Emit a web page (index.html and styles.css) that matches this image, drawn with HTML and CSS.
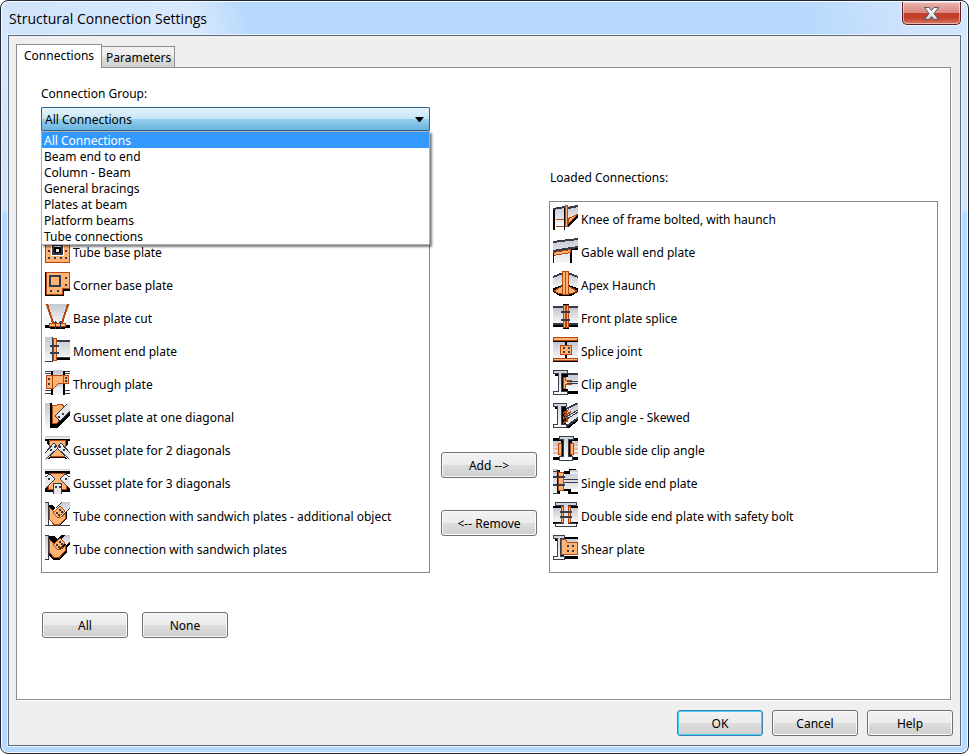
FILE: index.html
```
<!DOCTYPE html>
<html lang="en">
<head>
    <meta charset="UTF-8">
    <meta name="viewport" content="width=device-width, initial-scale=1.0">
    <title>Structural Connection Settings</title>
    <link rel="stylesheet" href="styles.css">
</head>
<body>

    <!-- Shared gradients for the steel parts -->
    <svg class="defs" width="0" height="0" aria-hidden="true">
        <linearGradient id="steel" x1="0" y1="0" x2="0" y2="1">
            <stop offset="0" stop-color="#c3c7cf"/>
            <stop offset="1" stop-color="#f6f7f9"/>
        </linearGradient>
        <linearGradient id="beam" x1="0" y1="0" x2="0" y2="1">
            <stop offset="0" stop-color="#cdd1d9"/>
            <stop offset="1" stop-color="#fbfcfd"/>
        </linearGradient>
        <linearGradient id="cross" x1="0" y1="0" x2="0" y2="1">
            <stop offset="0" stop-color="#ffffff"/>
            <stop offset="1" stop-color="#d4d4d8"/>
        </linearGradient>
    </svg>

    <div class="window">
        <header class="titlebar">
            <h1 class="title">Structural Connection Settings</h1>
            <button class="close" type="button" aria-label="Close">
                <svg width="17" height="15" viewBox="0 0 17 15"><path d="M1.500 1.500H6L8.500 4.500L11 1.500H15.500L11 7.500L15.500 13.500H11L8.500 10.500L6 13.500H1.500L6 7.500Z" fill="url(#cross)" stroke="#535666"/></svg>
            </button>
        </header>

        <main class="client">
            <div class="tabs" role="tablist">
                <button class="tab active" type="button" role="tab" aria-selected="true">Connections</button>
                <button class="tab" type="button" role="tab" aria-selected="false">Parameters</button>
            </div>

            <section class="panel" role="tabpanel">
                <div class="group">
                    <label for="group">Connection Group:</label>
                    <div class="combo">
                        <select id="group">
                            <option>All Connections</option>
                            <option>Beam end to end</option>
                            <option>Column - Beam</option>
                            <option>General bracings</option>
                            <option>Plates at beam</option>
                            <option>Platform beams</option>
                            <option>Tube connections</option>
                        </select>
                        <svg class="arrow" width="9" height="5" viewBox="0 0 9 5"><path d="M0 0H9L5 5H4Z"/></svg>
                        <ul class="dropdown" role="listbox">
                            <li class="selected" role="option" aria-selected="true">All Connections</li>
                            <li role="option">Beam end to end</li>
                            <li role="option">Column - Beam</li>
                            <li role="option">General bracings</li>
                            <li role="option">Plates at beam</li>
                            <li role="option">Platform beams</li>
                            <li role="option">Tube connections</li>
                        </ul>
                    </div>
                </div>

                <div class="columns">
                    <ul class="list available">
                        <li>
                            <svg class="icon" viewBox="0 0 25 25"><path class="o" d="M.5.5H24.500V24.500H.5Z"/><path fill="#fff" d="M6 5H19V18H6Z"/><path class="d" d="M7 6H18V17H7Z"/><path fill="#fff" d="M9 8H16V15H9Z"/><path class="k" d="M9 9H16V15H9Z"/><path fill="#e4e7ec" d="M11 11H14V14H11Z"/><path class="d" d="M3 5h2v2h-2zM20 5h2v2h-2zM3 12h2v2h-2zM20 12h2v2h-2zM3 19h2v2h-2zM9 19h2v2h-2zM15 19h2v2h-2zM20 19h2v2h-2z"/></svg>
                            Tube base plate
                        </li>
                        <li>
                            <svg class="icon" viewBox="0 0 25 25"><path class="k" d="M0 1H25V20H19V25H0Z"/><path class="o" d="M1.500 1.500H24.500V17.500H17.500V23.500H1.500Z"/><path class="dl w2" d="M5 5H15V15H5Z"/><path class="d" d="M20 6h2v2h-2zM20 13h2v2h-2zM5 19h2v2h-2zM12 19h2v2h-2z"/></svg>
                            Corner base plate
                        </li>
                        <li>
                            <svg class="icon" viewBox="0 0 25 25"><path class="s" d="M0 0H25L18 19H7Z"/><path class="k" d="M0 21H25V24H20V25H5V24H0Z"/><path fill="#f1f2f4" d="M0 8L5 19V21H0ZM25 8L20 19V21H25Z"/><path class="ol w2" d="M2 0L8 19M23 0L17 19"/><path class="o" d="M4.500 19.500H20.500V22.500H4.500Z"/><path class="dl" d="M10.500 17V25M15.500 17V25M9 18.500H12M14 18.500H17"/></svg>
                            Base plate cut
                        </li>
                        <li>
                            <svg class="icon" viewBox="0 0 25 25"><path class="s" d="M0 0H7V24H0ZM13 4H25V19H13Z"/><path class="d" d="M7 0H8V24H7ZM12 3H25V5H12ZM0 24H8V25H0Z"/><path class="k" d="M12 20H25V23H12Z"/><path class="o" d="M8.500 1.500H11.500V23.500H8.500Z"/><path class="d" d="M5 8H14V10H5ZM5 15H14V17H5ZM12 20H25V21H12Z"/></svg>
                            Moment end plate
                        </li>
                        <li>
                            <svg class="icon" viewBox="0 0 25 25"><path class="s" d="M8 0H18V25H8Z"/><path class="k" d="M6 1H8V25H6ZM18 1H20V25H18Z"/><path class="dl" d="M0 1.500H6M0 3.500H6M20 1.500H25M20 3.500H25M0 20.500H6M0 23.500H6M20 20.500H25M20 23.500H25"/><path class="o" d="M1.500 5.500H23.500V13.500H13.500L8.500 18.500H1.500Z"/><path class="ol" d="M7.500 6V18M18.500 6V13"/><path class="s" d="M9 18L14 14H18V19H9Z"/><path class="d" d="M3 8h2v2h-2zM3 13h2v2h-2zM20 7h2v2h-2zM20 10h2v2h-2z"/></svg>
                            Through plate
                        </li>
                        <li>
                            <svg class="icon" viewBox="0 0 25 25"><path class="s" d="M0 0H5V25H0Z"/><path class="k" d="M5 0H7V25H5ZM7 21H11L25 8V12L12 25H5Z"/><path class="o" d="M7.500 2.500L17 1.500L23 7L11.500 20.500H7.500Z"/><path fill="#e5e7ea" d="M11 12L22 0H25V8L15 18Z"/><path class="dl" d="M10 13L22 1M15 18L25 8M10 13L15 18"/><path class="d" d="M13 13h2v2h-2zM17 10h2v2h-2z"/></svg>
                            Gusset plate at one diagonal
                        </li>
                        <li>
                            <svg class="icon" viewBox="0 0 25 25"><path class="s" d="M0 0H25V3H0Z"/><path class="k" d="M0 3H25V5H0ZM2 5H23V8L20 11L25 20V24L18 22H7L0 24V19L5 11L2 8Z"/><path class="o" d="M4.500 4.500H20.500V20.500H4.500Z"/><path fill="#e8eaed" d="M0 17L9 7L14 12L1 24H0ZM25 17L16 7L11 12L24 24H25Z"/><path class="dl" d="M0 17L9 7L13 12L1 23M25 17L16 7L12 12L24 23"/><path class="d" d="M5 13h2v2h-2zM9 10h2v2h-2zM14 10h2v2h-2zM18 13h2v2h-2z"/></svg>
                            Gusset plate for 2 diagonals
                        </li>
                        <li>
                            <svg class="icon" viewBox="0 0 25 25"><path class="s" d="M0 0H25V2H0Z"/><path class="k" d="M0 2H25V5H0ZM4 15H21L25 20V23H0V20Z"/><path class="o" d="M4.500 4.500H20.500V13L22 20.500H3L4.500 13Z"/><path fill="#e8eaed" d="M0 8L5 5L10 10L0 20ZM25 8L20 5L15 10L25 20Z"/><path class="dl" d="M0 8L5 5L10 10L0 20M25 8L20 5L15 10L25 20"/><path fill="#e4e6ea" d="M8 15H17V25H8Z"/><path class="dl" d="M8.500 25V14.500H16.500V25"/><path class="d" d="M3 9h2v2h-2zM20 9h2v2h-2zM10 17h2v2h-2zM14 17h2v2h-2z"/></svg>
                            Gusset plate for 3 diagonals
                        </li>
                        <li>
                            <svg class="icon" viewBox="0 0 25 25"><path class="s" d="M0 0H3V24H0Z"/><path class="dl" d="M0 .5H3.500V24M0 23.500H25"/><path class="k" d="M4 3H7L10 6L8 9L4 7ZM15 23L22 17V10L18 12L15 16Z"/><path class="s" d="M11 6L17 0H25V6L18 13Z"/><path class="dl" d="M11 6L17 0M18 13L25 6"/><path class="o" d="M4.500 5.500L8 9L15 16L20 12V17L14.500 22.500H9L4.500 17.500Z"/><path class="of" d="M7 10L14 16L12 19L6 14Z"/><path class="o" d="M8 11L15 4L20 9L13 16Z"/><path class="d" d="M11 10h2v2h-2zM14 7h2v2h-2zM13 12h2v2h-2zM16 9h2v2h-2z"/></svg>
                            Tube connection with sandwich plates - additional object
                        </li>
                        <li>
                            <svg class="icon" viewBox="0 0 25 25"><path class="s" d="M0 0H3V25H0Z"/><path class="dl" d="M0 .5H3.500V24.500H0"/><path class="k" d="M4 1H9L12 4L16 0H22L25 4V9L22 12V17L14 25H8L4 20Z"/><path class="s" d="M16 4L20 0H25V7L21 10Z"/><path class="o" d="M4.500 4.500L8 8L15 15L20 11V16L14 22.500H9L4.500 17.500Z"/><path class="of" d="M7 9L14 15L12 18L6 13Z"/><path class="o" d="M8 10L15 3L20 8L13 15Z"/><path class="d" d="M11 9h2v2h-2zM14 6h2v2h-2zM13 11h2v2h-2zM16 8h2v2h-2z"/></svg>
                            Tube connection with sandwich plates
                        </li>
                    </ul>

                    <div class="transfer">
                        <button class="btn" type="button">Add --&gt;</button>
                        <button class="btn" type="button">&lt;-- Remove</button>
                    </div>

                    <div class="loaded">
                        <h2 class="caption" id="loaded-caption">Loaded Connections:</h2>
                        <ul class="list" aria-labelledby="loaded-caption">
                            <li>
                                <svg class="icon" viewBox="0 0 25 25"><path class="s" d="M2 3L25 0V9L14 20H2Z"/><path class="k" d="M0 3H2V25H0ZM11 2H12V25H11ZM14 19L25 8V12L15 22H12V19Z"/><path class="dl w2" d="M0 4L12 2M15 3L25 1"/><path class="ol" d="M3 14.500H11M3 21.500H11"/><path class="o" d="M15.500 13.500L24.500 9.500L15.500 18.500Z"/><path class="o" d="M12.500 .5H14.500V21.500H12.500Z"/></svg>
                                Knee of frame bolted, with haunch
                            </li>
                            <li>
                                <svg class="icon" viewBox="0 0 25 25"><path class="s" d="M0 5L25 0V8L0 13ZM2 18L18 15V25H2Z"/><path class="k" d="M0 12L25 8V12H19V25H17V15L0 18Z"/><path class="dl w2" d="M0 4L25 1M0 13L25 9"/><path class="o" d="M.5 14.500L17.500 11.500V14.500L.5 17.500Z"/><path class="k" d="M0 15H1V25H0Z"/></svg>
                                Gable wall end plate
                            </li>
                            <li>
                                <svg class="icon" viewBox="0 0 25 25"><path class="s" d="M0 6L10 2H15L25 6V18H0Z"/><path class="k" d="M0 17L10 14H15L25 17V21L18 25H7L0 21Z"/><path class="dl w2" d="M0 6L10 2M25 6L15 2"/><path class="o" d="M1 20L10 15V22.500H6ZM24 20L15 15V22.500H19Z"/><path class="o" d="M9.500 .5H12.500V23.500H9.500ZM12.500 .5H15.500V23.500H12.500Z"/></svg>
                                Apex Haunch
                            </li>
                            <li>
                                <svg class="icon" viewBox="0 0 25 25"><path class="s" d="M0 4H25V19H0Z"/><path class="k" d="M0 21H25V23H0ZM10 0H16V25H10Z"/><path class="d" d="M0 2H25V4H0ZM0 19H25V21H0Z"/><path class="o" d="M10.500 1.500H12.500V23.500H10.500ZM13.500 1.500H15.500V23.500H13.500Z"/><path class="d" d="M8 7H17V9H8ZM8 15H17V17H8Z"/></svg>
                                Front plate splice
                            </li>
                            <li>
                                <svg class="icon" viewBox="0 0 25 25"><path class="k" d="M0 3H25V5H0ZM0 22H25V25H0Z"/><path class="s" d="M0 5H25V21H0Z"/><path class="k" d="M12 4H14V22H12Z"/><path class="o" d="M.5 .5H24.500V3.500H.5ZM.5 21.500H24.500V23.500H.5ZM7.500 8.500H18.500V17.500H7.500Z"/><path class="d" d="M10 10h2v2h-2zM15 10h2v2h-2zM10 14h2v2h-2zM15 14h2v2h-2z"/></svg>
                                Splice joint
                            </li>
                            <li>
                                <svg class="icon" viewBox="0 0 25 25"><path class="s" d="M13 4H25V20H13Z"/><path class="d" d="M12 3H25V5H12Z"/><path class="k" d="M2 4H15V7H12V19H15V22H8V6H2ZM14 21H25V24H14Z"/><path class="e" d="M1 .5H14.500V3.500H8.500V21.500H14.500V24.500H.5V21.500H5.500V3.500H.5Z"/><path class="o" d="M10 7.500H12V10.500H18V14.500H12V18.500H10Z"/><path class="d" d="M14 11H25V12H14ZM14 13H25V14H14Z"/></svg>
                                Clip angle
                            </li>
                            <li>
                                <svg class="icon" viewBox="0 0 25 25"><path class="s" d="M12 8L25 1V16L15 22Z"/><path class="k" d="M2 4H13V21H8V6H2ZM14 22L25 15V18L16 25H14Z"/><path class="e" d="M.5 .5H13.500V3.500H8.500V21.500H13.500V24.500H.5V21.500H4.500V3.500H.5Z"/><path class="dl w2" d="M13 6L25 0M14 23L25 15"/><path class="ol w2" d="M10 10L14 8L12 12L18 9M10 16L14 13V18L10 20"/><path class="dl" d="M13 14L25 7M14 16L25 9"/></svg>
                                Clip angle - Skewed
                            </li>
                            <li>
                                <svg class="icon" viewBox="0 0 25 25"><path class="s" d="M0 4H25V20H0Z"/><path class="k" d="M0 2H25V5H0ZM0 21H25V24H0ZM8 3H11V23H8ZM16 3H19V23H16Z"/><path class="o" d="M5.500 7.500H8.500V18.500H5.500ZM17.500 7.500H20.500V18.500H17.500Z"/><path fill="#efb99a" d="M0 8H5V10H0ZM0 12H5V14H0ZM0 16H5V18H0ZM21 8H25V10H21ZM21 12H25V14H21ZM21 16H25V18H21Z"/><path class="e" d="M6.500 .5H20.500V3.500H15.500V20.500H19.500V24.500H6.500V20.500H10.500V3.500H6.500Z"/></svg>
                                Double side clip angle
                            </li>
                            <li>
                                <svg class="icon" viewBox="0 0 25 25"><path class="s" d="M0 0H5V25H0ZM12 5H25V20H12Z"/><path class="k" d="M4 1H7V25H4ZM11 2H16V0H23V2H18V5H11ZM11 20H18V23H25V25H15V22H11Z"/><path class="s" d="M17 1H25V5H17Z"/><path class="dl" d="M11 10.500H25M11 13.500H25M0 2.500H6M0 24.500H6"/><path class="o" d="M5.500 3.500H10.500V21.500H5.500Z"/><path class="d" d="M0 7H12V9H0ZM0 15H12V17H0Z"/></svg>
                                Single side end plate
                            </li>
                            <li>
                                <svg class="icon" viewBox="0 0 25 25"><path class="s" d="M0 5H25V20H0Z"/><path class="k" d="M0 4H25V6H0ZM0 20H25V22H0Z"/><path class="e" d="M2.500 .5H23.500V3.500H15.500V21.500H23.500V24.500H2.500V21.500H10.500V3.500H2.500Z"/><path class="o" d="M8.500 4.500H10.500V20.500H8.500ZM15.500 4.500H17.500V20.500H15.500Z"/><path class="d" d="M7 9H19V11H7ZM7 14H19V16H7Z"/></svg>
                                Double side end plate with safety bolt
                            </li>
                            <li>
                                <svg class="icon" viewBox="0 0 25 25"><path class="s" d="M9 2H25V20H9Z"/><path class="k" d="M2 4H8V2H25V4H11V21H25V24H8V6H2Z"/><path class="e" d="M.5 .5H11.500V3.500H7.500V21.500H11.500V24.500H.5V21.500H4.500V3.500H.5Z"/><path class="o" d="M8.500 4.500H12.500L14.500 7.500H24.500V19.500H8.500Z"/><path class="d" d="M14 10h2v2h-2zM19 10h2v2h-2zM14 15h2v2h-2zM19 15h2v2h-2z"/></svg>
                                Shear plate
                            </li>
                        </ul>
                    </div>
                </div>

                <div class="select-buttons">
                    <button class="btn" type="button">All</button>
                    <button class="btn" type="button">None</button>
                </div>
            </section>

            <footer class="footer">
                <button class="btn default" type="button">OK</button>
                <button class="btn" type="button">Cancel</button>
                <button class="btn" type="button">Help</button>
            </footer>
        </main>
    </div>

</body>
</html>
```
FILE: styles.css
```
* {
    box-sizing: border-box;
}

body {
    margin: 0;
    background-color: #fff;
    color: #000;
    font-family: "Noto Sans", "Open Sans", sans-serif;
    font-size: 12px;
    line-height: 16px;
}

button,
select {
    font: inherit;
    color: inherit;
}

ul {
    list-style: none;
    margin: 0;
    padding: 0;
}

.defs {
    position: absolute;
}

/* Window frame */
.window {
    display: flex;
    flex-direction: column;
    min-height: 100vh;
    padding: 0 7px 7px;
    border: 1px solid #23272f;
    border-radius: 8px;
    background: linear-gradient(#d5e7fc 0, #d0e4fc 210px, #b7d9fd 212px, #b7d9fd 100%);
    box-shadow: inset 0 0 0 1px #f4faff;
}

.titlebar {
    display: flex;
    justify-content: space-between;
    align-items: flex-start;
    height: 34px;
    margin: 0 -6px;
    padding: 1px 6px 0;
    background: linear-gradient(75deg, #cfe3fb 0, #d8e9fd 20%, #b6d8fc 26%, #b6d8fc 82%, #d0e4fc 94%);
    background-clip: content-box;
}

.title {
    margin: 7px 0 0 1px;
    font-family: "Open Sans", sans-serif;
    font-size: 14px;
    font-weight: normal;
    line-height: 20px;
}

.close {
    display: flex;
    justify-content: center;
    align-items: center;
    width: 59px;
    height: 23px;
    padding: 0;
    border: 1px solid #5b1f22;
    border-top: 0;
    border-radius: 0 0 5px 5px;
    background: linear-gradient(#eab5ae 0, #d98880 48%, #c3402f 50%, #c2402c 70%, #d97560 100%);
    box-shadow: inset 0 0 0 1px rgba(255, 255, 255, 0.5), 0 0 0 1px #eaf4ff;
}

.client {
    flex: 1;
    display: flex;
    flex-direction: column;
    padding: 8px 9px 9px 7px;
    border: 1px solid #5d6b7b;
    background-color: #efefef;
    box-shadow: 0 0 0 1px #e6f3ff;
}

/* Tabs */
.tabs {
    display: flex;
    align-items: flex-end;
    height: 24px;
}

.tab {
    height: 22px;
    padding: 2px 3px 0 4px;
    border: 1px solid #8e9099;
    border-left: 0;
    border-bottom-color: #8b8c95;
    background: linear-gradient(#f2f2f2 0, #ebebeb 50%, #dddddd 50%, #cfcfcf 100%);
}

.tab.active {
    z-index: 1;
    height: 24px;
    padding: 0 7px 2px;
    border-left: 1px solid #8b8c95;
    border-bottom: 0;
    background: #fff;
}

.panel {
    flex: 1;
    margin-top: -1px;
    padding: 18px 12px 24px 24px;
    border: 1px solid #8b8c95;
    background-color: #fff;
    box-shadow: 1px 1px 0 #fff;
}

/* Connection group combo */
.group {
    display: flex;
    flex-direction: column;
    gap: 5px;
    width: calc(50% - 60px);
}

.combo {
    position: relative;
}

.combo select {
    display: block;
    width: 100%;
    height: 24px;
    padding: 2px 3px 0;
    border: 1px solid #2c628b;
    border-radius: 1px;
    appearance: none;
    background: linear-gradient(#e5f4fc 0, #c4e5f6 50%, #98d1ef 50%, #68b3db 100%);
}

.arrow {
    position: absolute;
    top: 10px;
    right: 6px;
}

.dropdown {
    position: absolute;
    top: 100%;
    left: 0;
    z-index: 2;
    width: 100%;
    border: 1px solid #abb0b8;
    background-color: #fff;
    box-shadow: 2px 2px 2px rgba(0, 0, 0, 0.5);
}

.dropdown li {
    padding: 2px 0 0 2px;
    line-height: 14px;
}

.dropdown .selected {
    background-color: #3399ff;
    color: #fff;
}

/* Connection lists */
.columns {
    display: grid;
    grid-template-columns: 1fr 119px 1fr;
    margin-top: 39px;
}

.caption {
    margin: 0 0 15px 1px;
    font-size: 12px;
    font-weight: normal;
}

.list {
    min-height: 372px;
    padding: 0 3px;
    border: 1px solid #828790;
    background-color: #fff;
}

.list li {
    display: flex;
    align-items: center;
    gap: 3px;
    height: 33px;
    padding-top: 2px;
    white-space: nowrap;
}

.available {
    margin-top: 31px;
    padding-top: 33px;
}

.transfer {
    display: flex;
    flex-direction: column;
    justify-content: flex-end;
    gap: 32px;
    padding: 0 12px 37px 11px;
}

/* Icons */
.icon {
    flex: none;
    width: 25px;
    height: 25px;
    margin-bottom: 4px;
    shape-rendering: crispEdges;
}

.o { fill: #ffb375; stroke: #b5480f; }
.of { fill: #ffb375; }
.ol { fill: none; stroke: #b5480f; }
.s { fill: url(#steel); }
.e { fill: url(#beam); stroke: #394150; }
.k { fill: #000; }
.d { fill: #343c4b; }
.dl { fill: none; stroke: #343c4b; }
.w2 { stroke-width: 2; }

/* Buttons */
.btn {
    width: 86px;
    height: 26px;
    padding: 2px 0 0;
    border: 1px solid #707070;
    border-radius: 3px;
    background: linear-gradient(#f2f2f2 0, #ebebeb 50%, #dddddd 50%, #cfcfcf 100%);
    box-shadow: inset 0 0 0 1px #fafafa;
}

.transfer .btn {
    width: 100%;
}

.btn.default {
    border-color: #3c7fb1;
    box-shadow: inset 0 0 0 1px #43d4f8;
}

.select-buttons {
    display: flex;
    gap: 14px;
    margin: 39px 0 0 1px;
}

.footer {
    display: flex;
    justify-content: flex-end;
    gap: 9px;
    margin-right: -2px;
    padding-top: 10px;
}
```
